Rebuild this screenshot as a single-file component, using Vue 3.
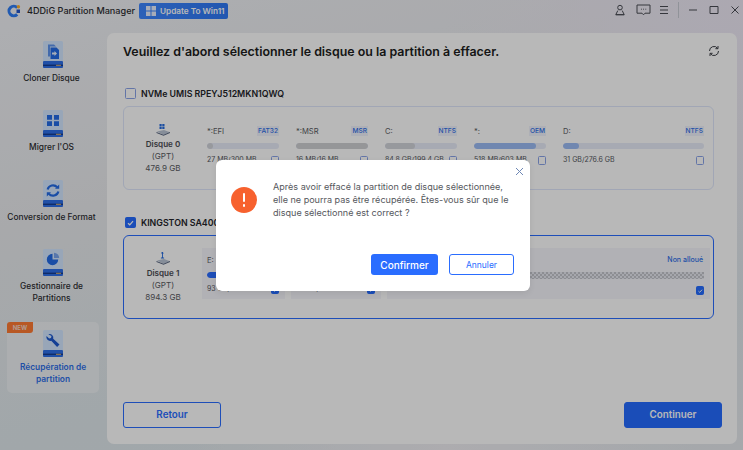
<script setup>
const navItems = [
  { label: 'Cloner Disque', icon: 'clone' },
  { label: 'Migrer l\'OS', icon: 'win' },
  { label: 'Conversion de Format', icon: 'sync' },
  { label: 'Gestionnaire de Partitions', icon: 'pie', tall: true },
  { label: 'Récupération de partition', icon: 'wrench', active: true, badge: 'NEW' }
]
const disk0 = [
  { name: '*:EFI', tag: 'FAT32', used: 8, kind: 'gray', size: '27 MB/300 MB' },
  { name: '*:MSR', tag: 'MSR', used: 100, kind: 'dark', size: '16 MB/16 MB' },
  { name: 'C:', tag: 'NTFS', used: 42, kind: 'gray', size: '84.8 GB/199.4 GB' },
  { name: '*:', tag: 'OEM', used: 86, kind: 'soft', size: '518 MB/603 MB' },
  { name: 'D:', tag: 'NTFS', used: 11, kind: 'soft', size: '31 GB/276.6 GB' }
]
const disk1 = [
  { name: 'E:', tag: 'NTFS', used: 20, kind: 'strong', size: '93 GB/450 GB', checked: true },
  { name: 'F:', tag: 'NTFS', used: 20, kind: 'strong', size: '80 GB/400 GB', checked: true, wide: true }
]
</script>

<template>
  <div class="app">
    <header class="titlebar">
      <svg class="logo" viewBox="0 0 14 14" width="14" height="14">
        <path d="M10.200 3.600A4.800 4.800 0 1 0 10.200 10.400" fill="none" stroke="#2f7df5" stroke-width="3" />
        <path d="M9.500 5.500h3.500v3.500H9.500z" fill="#2457c8" />
        <circle cx="11.400" cy="2.800" r="1.700" fill="#ffb02e" />
      </svg>
      <span class="app-name">4DDiG Partition Manager</span>
      <button class="update">
        <svg viewBox="0 0 10 10" width="10" height="10">
          <path d="M0 0h4.500v4.500H0zM5.500 0H10v4.500H5.500zM0 5.500h4.500V10H0zM5.500 5.500H10V10H5.500z" fill="#e8efff" />
        </svg>
        Update To Win11
      </button>
      <div class="win-tools">
        <svg viewBox="0 0 12 12" width="12" height="12" class="t-user">
          <circle cx="6" cy="3.600" r="2.300" /><path d="M3.800 6.600 1.800 10.600h8.400L8.200 6.600M1.800 10.800h8.400" />
        </svg>
        <svg viewBox="0 0 15 12" width="15" height="12" class="t-chat">
          <path d="M1 1h13v8.200H9L7.500 10.800 6 9.200H1z" /><path d="M5 5.200h.8M7.200 5.200H8M9.400 5.200h.8" />
        </svg>
        <svg viewBox="0 0 10 10" width="10" height="10" class="t-menu">
          <path d="M1 1.500h8M1 5h8M1 8.500h8" />
        </svg>
        <i class="t-sep"></i>
        <svg viewBox="0 0 10 10" width="10" height="10" class="t-min"><path d="M1 5h8" /></svg>
        <svg viewBox="0 0 10 10" width="10" height="10" class="t-max"><path d="M1 1.500h8v7H1z" /></svg>
        <svg viewBox="0 0 10 10" width="10" height="10" class="t-close"><path d="M1.500 1.500l7 7M8.500 1.500l-7 7" /></svg>
      </div>
    </header>

    <div class="body">
      <nav class="sidebar">
        <div v-for="item in navItems" :key="item.label" class="nav-item" :class="{ active: item.active, tall: item.tall }">
          <span v-if="item.badge" class="badge">{{ item.badge }}</span>
          <svg class="nav-icon" viewBox="0 0 20 27" width="20" height="27">
            <path d="M1.500 0h17A1.500 1.500 0 0 1 20 1.500V20H0V1.500A1.500 1.500 0 0 1 1.500 0z" fill="#d3e6ff" />
            <path d="M1 20h18a1 1 0 0 1 1 1v5a1 1 0 0 1-1 1H1a1 1 0 0 1-1-1v-5a1 1 0 0 1 1-1z" fill="#2f6fe8" />
            <path d="M0 23.600h20V25H0z" fill="#173e91" /><path d="M13 23.800h5v1h-5z" fill="#e2b36b" />
            <g v-if="item.icon === 'clone'" fill="#236be6">
              <path d="M5 3.500h6l2 2H7v10H5z" fill="#5d93ee" />
              <path d="M7.500 6.500h6l2.500 2.500v9H7.500z" />
              <path d="M9 11.500h2.500V10l2.500 2.500-2.500 2.500v-1.500H9z" fill="#e8f1ff" />
            </g>
            <g v-else-if="item.icon === 'win'" fill="#236be6">
              <path d="M4 5h5v4.700H4zM11 5h5v4.700h-5zM4 11.300h5V16H4zM11 11.300h5V16h-5z" />
            </g>
            <g v-else-if="item.icon === 'sync'" fill="none" stroke="#236be6" stroke-width="2.200">
              <path d="M4.600 9.500A5.600 5.600 0 0 1 14.200 7.200" />
              <path d="M15.400 11.500A5.600 5.600 0 0 1 5.800 13.800" />
              <path d="M16.200 4.500v4.200h-4.200z" fill="#236be6" stroke="none" />
              <path d="M3.800 16.500v-4.200H8z" fill="#236be6" stroke="none" />
            </g>
            <g v-else-if="item.icon === 'pie'">
              <path d="M9.500 4.800a5.700 5.700 0 1 0 5.700 5.700H9.500z" fill="#236be6" />
              <path d="M11 3.800v5.200h5.200A5.300 5.300 0 0 0 11 3.800z" fill="#7ba6ee" />
            </g>
            <g v-else>
              <path d="M5.300 4.200a3.800 3.800 0 0 1 4.900 4.600l6.300 5.700-2.400 2.500-5.900-6.200a3.800 3.800 0 0 1-4.700-4.700l2.600 2.400 1.900-.5.500-1.900z" fill="#1c58cf" />
            </g>
          </svg>
          <span class="nav-label">{{ item.label }}</span>
        </div>
      </nav>

      <main class="panel">
        <div class="panel-head">
          <h1>Veuillez d'abord sélectionner le disque ou la partition à effacer.</h1>
          <svg class="refresh" viewBox="0 0 12 12" width="12" height="12">
            <path d="M1.500 6A4.500 4.500 0 0 1 9.700 3.400M10.500 6A4.500 4.500 0 0 1 2.300 8.600" />
            <path d="M10 1v2.700H7.400M2 11V8.300h2.600" />
          </svg>
        </div>

        <div class="disk-row">
          <span class="check"></span>
          <span class="disk-title">NVMe UMIS RPEYJ512MKN1QWQ</span>
        </div>
        <section class="card">
          <div class="disk-info">
            <svg viewBox="0 0 16 13" width="16" height="13">
              <path d="M2 8.500 9 7l6 2.300-6.500 2.500z" fill="#b9c4d4" />
              <path d="M1.500 9v1l7 2.700L15 10V9l-6.500 2.800z" fill="#54627d" />
              <path d="M4.500 1h2.200v2.200H4.500zM7.300 1h2.200v2.200H7.300zM4.500 3.800h2.200V6H4.500zM7.300 3.800h2.200V6H7.300z" fill="#246be0" />
            </svg>
            <b>Disque 0</b><span>(GPT)</span><span>476.9 GB</span>
          </div>
          <div class="parts">
            <div v-for="p in disk0" :key="p.name" class="part">
              <div class="part-top"><span>{{ p.name }}</span><em>{{ p.tag }}</em></div>
              <div class="track"><div class="fill" :class="p.kind" :style="{ width: p.used + '%' }"></div></div>
              <div class="part-bottom"><span>{{ p.size }}</span><i class="check small"></i></div>
            </div>
          </div>
        </section>

        <div class="disk-row second">
          <span class="check on">
            <svg viewBox="0 0 10 10" width="10" height="10"><path d="M2.200 5.200 4.200 7l3.600-4" /></svg>
          </span>
          <span class="disk-title">KINGSTON SA400S37960G</span>
        </div>
        <section class="card selected">
          <div class="disk-info">
            <svg viewBox="0 0 16 13" width="16" height="13">
              <path d="M2 8.500 9 7l6 2.300-6.500 2.500z" fill="#b9c4d4" />
              <path d="M1.500 9v1l7 2.700L15 10V9l-6.500 2.800z" fill="#54627d" />
              <path d="M6.800 0h1l1 1.600H7.900v3.600l1.200.6v.7H5.900v-.7l1.100-.6V1.600h-.9z" fill="#246be0" />
            </svg>
            <b>Disque 1</b><span>(GPT)</span><span>894.3 GB</span>
          </div>
          <div class="parts">
            <div v-for="p in disk1" :key="p.name" class="part tinted" :class="{ wide: p.wide }">
              <div class="part-top"><span>{{ p.name }}</span><em>{{ p.tag }}</em></div>
              <div class="track"><div class="fill" :class="p.kind" :style="{ width: p.used + '%' }"></div></div>
              <div class="part-bottom"><span>{{ p.size }}</span><i class="check small on"><svg viewBox="0 0 10 10" width="8" height="8"><path d="M2.200 5.200 4.200 7l3.600-4" /></svg></i></div>
            </div>
            <div class="part tinted grow">
              <div class="part-top"><span></span><em class="plain">Non alloué</em></div>
              <div class="track hatched"></div>
              <div class="part-bottom"><span></span><i class="check small on"><svg viewBox="0 0 10 10" width="8" height="8"><path d="M2.200 5.200 4.200 7l3.600-4" /></svg></i></div>
            </div>
          </div>
        </section>

        <footer class="actions">
          <button class="btn ghost">Retour</button>
          <button class="btn solid">Continuer</button>
        </footer>
      </main>
    </div>

    <div class="overlay"></div>

    <div class="modal" role="dialog">
      <svg class="modal-close" viewBox="0 0 9 9" width="9" height="9"><path d="M1 1l7 7M8 1 1 8" /></svg>
      <div class="modal-body">
        <span class="alert-icon"><i></i><i></i></span>
        <p>Après avoir effacé la partition de disque sélectionnée, elle ne pourra pas être récupérée. Êtes-vous sûr que le disque sélectionné est correct ?</p>
      </div>
      <div class="modal-actions">
        <button class="m-btn primary">Confirmer</button>
        <button class="m-btn outline">Annuler</button>
      </div>
    </div>
  </div>
</template>

<style>
html, body { margin: 0; padding: 0; }
</style>

<style scoped>
.app {
  position: relative;
  width: 743px;
  height: 450px;
  overflow: hidden;
  font-family: Inter, "Liberation Sans", sans-serif;
  color: #1f2024;
  background:
    radial-gradient(circle at 100% 0, #efe9f6 0, rgba(239, 233, 246, 0) 35%),
    radial-gradient(circle at 60% 100%, #f0eff3 0, rgba(240, 239, 243, 0) 40%),
    linear-gradient(165deg, #f1f2f6 0, #e8eaed 40%, #dfe8ec 70%, #e6e9ee 100%);
  display: flex;
  flex-direction: column;
}
.titlebar {
  height: 33px;
  flex: none;
  display: flex;
  align-items: flex-start;
  padding: 3px 0 0 6px;
  box-sizing: border-box;
}
.logo { margin: 1px 6px 0 1px; flex: none; }
.app-name {
  font-size: 9.1px;
  line-height: 16px;
  width: 112px;
  flex: none;
  font-weight: 500;
  color: #2b2c30;
  white-space: nowrap;
}
.update {
  width: 89px;
  height: 16px;
  flex: none;
  padding: 0 0 0 7px;
  border: none;
  border-radius: 2px;
  background: linear-gradient(90deg, #3d86ff, #2f78f5);
  color: #fff;
  font: 600 8.2px/16px Inter, "Liberation Sans", sans-serif;
  display: flex;
  align-items: center;
  gap: 4px;
  white-space: nowrap;
}
.update svg { flex: none; }
.win-tools {
  margin-left: auto;
  display: flex;
  align-items: center;
  height: 14px;
  padding-right: 3px;
}
.win-tools svg { fill: none; stroke: #4a4d55; stroke-width: 1; flex: none; }
.t-user { margin-right: 9.5px; }
.t-chat { margin-right: 8.5px; }
.t-menu { margin-right: 9px; }
.t-sep { width: 1px; height: 16px; background: #c8ccd4; margin-right: 9px; flex: none; }
.t-min { margin-right: 11px; }
.t-max { margin-right: 11px; }

.body { flex: 1; display: flex; min-height: 0; }
.sidebar {
  width: 107px;
  flex: none;
  box-sizing: border-box;
  padding: 0 11px 0 7px;
  display: flex;
  flex-direction: column;
  gap: 9.33px;
}
.nav-item {
  position: relative;
  height: 60px;
  flex: none;
  box-sizing: border-box;
  padding-top: 8px;
  display: flex;
  flex-direction: column;
  align-items: center;
  text-align: center;
  border-radius: 5px;
  margin: 0 -3px 0 0;
}
.nav-item.tall { height: 71.67px; }
.nav-item.active { background: rgba(255, 255, 255, 0.42); height: 71px; color: #2f6fe8; }
.nav-icon { flex: none; }
.nav-label {
  margin: 4px -7px 0;
  font-size: 8.4px;
  line-height: 12px;
  font-weight: 500;
  color: #2c2d31;
}
.nav-item:not(.active) .nav-label { margin-left: -7px; margin-right: -4px; }
.nav-item.active .nav-label { margin: 4px 6px 0; color: #2f6fe8; font-weight: 600; }
.badge {
  position: absolute;
  left: 0;
  top: 0;
  width: 26px;
  height: 11px;
  background: #ff7a33;
  border-radius: 3px 0 3px 0;
  color: #f7d9c8;
  font-size: 6px;
  line-height: 11px;
  font-weight: 700;
  text-align: center;
}

.panel {
  width: 630px;
  flex: none;
  height: 411px;
  background: #fff;
  border-radius: 7px;
  box-sizing: border-box;
  padding: 9px 15px 16px 16px;
  display: flex;
  flex-direction: column;
}
.panel-head {
  display: flex;
  align-items: center;
  justify-content: space-between;
  height: 18px;
  margin-bottom: 27px;
  padding-right: 2px;
}
h1 {
  margin: 0;
  font-size: 12.4px;
  font-weight: 600;
  color: #1c1d20;
  white-space: nowrap;
}
.refresh { fill: none; stroke: #3c3f46; stroke-width: 1; }

.disk-row { display: flex; align-items: center; gap: 5px; height: 12px; margin: 0 0 7px 2px; }
.disk-row.second { margin-top: 26px; }
.disk-title { font-size: 8.8px; font-weight: 600; color: #24252a; white-space: nowrap; }
.check {
  width: 11px;
  height: 11px;
  box-sizing: border-box;
  border: 1px solid #8aa3e8;
  border-radius: 1.500px;
  background: #fff;
  display: inline-flex;
  flex: none;
}
.check svg { fill: none; stroke: #fff; stroke-width: 1.400; margin: auto; }
.check.on { background: #246bff; border-color: #246bff; }
.check.small { width: 8.500px; height: 8.500px; margin-top: 3px; }

.card {
  width: 591px;
  height: 84px;
  box-sizing: border-box;
  border: 1px solid #dfe7fb;
  border-radius: 6px;
  padding: 12px 3px 0 0;
  display: flex;
}
.card.selected { border-color: #2a6dff; }
.disk-info {
  width: 78px;
  flex: none;
  padding-top: 4px;
  box-sizing: border-box;
  display: flex;
  flex-direction: column;
  align-items: center;
  font-size: 8.100px;
  line-height: 12px;
  color: #5a5c63;
}
.disk-info svg { margin: 0 0 2px; }
.disk-info b { font-weight: 600; color: #4b4d54; }
.parts { flex: 1; display: flex; gap: 6px; }
.part {
  width: 83px;
  height: 51px;
  flex: none;
  box-sizing: border-box;
  padding: 6px 6px 0 5px;
}
.part:last-child { flex: 1; }
.part.wide { width: 90px; }
.part.tinted { background: #f5f6fb; }
.part.grow { flex: 1; }
.part-top {
  display: flex;
  justify-content: space-between;
  align-items: center;
  height: 12px;
  font-size: 7.600px;
  color: #5a5c63;
}
.part-top em {
  font-style: normal;
  font-size: 6.600px;
  font-weight: 500;
  color: #2f6fe8;
  background: #f0f3fd;
  padding: 0 1px;
  line-height: 10px;
}
.part-top em.plain { background: none; font-size: 7px; }
.track {
  height: 6px;
  margin-top: 6px;
  border-radius: 3px;
  background: #e8ecf9;
  overflow: hidden;
}
.fill { height: 100%; border-radius: 3px; }
.fill.gray { background: #d2d4da; }
.fill.dark { background: #cfd0d3; }
.fill.soft { background: #9cbcf4; }
.fill.strong { background: #2a6dff; }
.track.hatched {
  border-radius: 0;
  height: 7px;
  background: repeating-conic-gradient(#c4c5cc 0 25%, #e6e8f0 0 50%) 0 0 / 4px 4px;
}
.part-bottom {
  display: flex;
  justify-content: space-between;
  align-items: center;
  height: 12px;
  margin-top: 4px;
  font-size: 7px;
  color: #55575e;
  white-space: nowrap;
}
.actions { margin-top: auto; display: flex; justify-content: space-between; }
.btn {
  width: 98px;
  height: 26px;
  border-radius: 3px;
  font: 600 9.800px/1 Inter, "Liberation Sans", sans-serif;
  box-sizing: border-box;
}
.btn.ghost { background: #fff; border: 1px solid #2a6dff; color: #2a6dff; }
.btn.solid { background: #246bff; border: 1px solid #246bff; color: #fff; }

.overlay { position: absolute; inset: 0; background: rgba(0, 0, 0, 0.28); }

.modal {
  position: absolute;
  left: 216px;
  top: 160px;
  width: 314px;
  height: 131px;
  box-sizing: border-box;
  background: #fff;
  border-radius: 6px;
  padding: 20px 16px 16px 15px;
  box-shadow: 0 2px 6px rgba(0, 0, 0, 0.08);
  display: flex;
  flex-direction: column;
}
.modal-close {
  position: absolute;
  right: 6px;
  top: 7px;
  fill: none;
  stroke: #6f88b5;
  stroke-width: 1;
}
.modal-body { display: flex; gap: 16px; }
.alert-icon {
  width: 26px;
  height: 26px;
  margin-top: 7px;
  flex: none;
  border-radius: 50%;
  background: #f7612e;
  display: flex;
  flex-direction: column;
  align-items: center;
  justify-content: center;
  gap: 2px;
}
.alert-icon i { width: 2.400px; background: #fff; border-radius: 1px; }
.alert-icon i:first-child { height: 9px; }
.alert-icon i:last-child { height: 2.400px; }
p {
  margin: -0.500px 0 0;
  font-size: 9.050px;
  line-height: 13px;
  color: #55575c;
  width: 240px;
}
.modal-actions { margin-top: auto; display: flex; justify-content: flex-end; gap: 11px; }
.m-btn { height: 21px; border-radius: 3px; box-sizing: border-box; font-family: Inter, "Liberation Sans", sans-serif; }
.m-btn.primary { width: 67px; background: #2a6dff; border: none; color: #fff; font-size: 10px; font-weight: 500; }
.m-btn.outline { width: 65px; background: #fff; border: 1px solid #2a6dff; color: #2a6dff; font-size: 8.500px; }
</style>
